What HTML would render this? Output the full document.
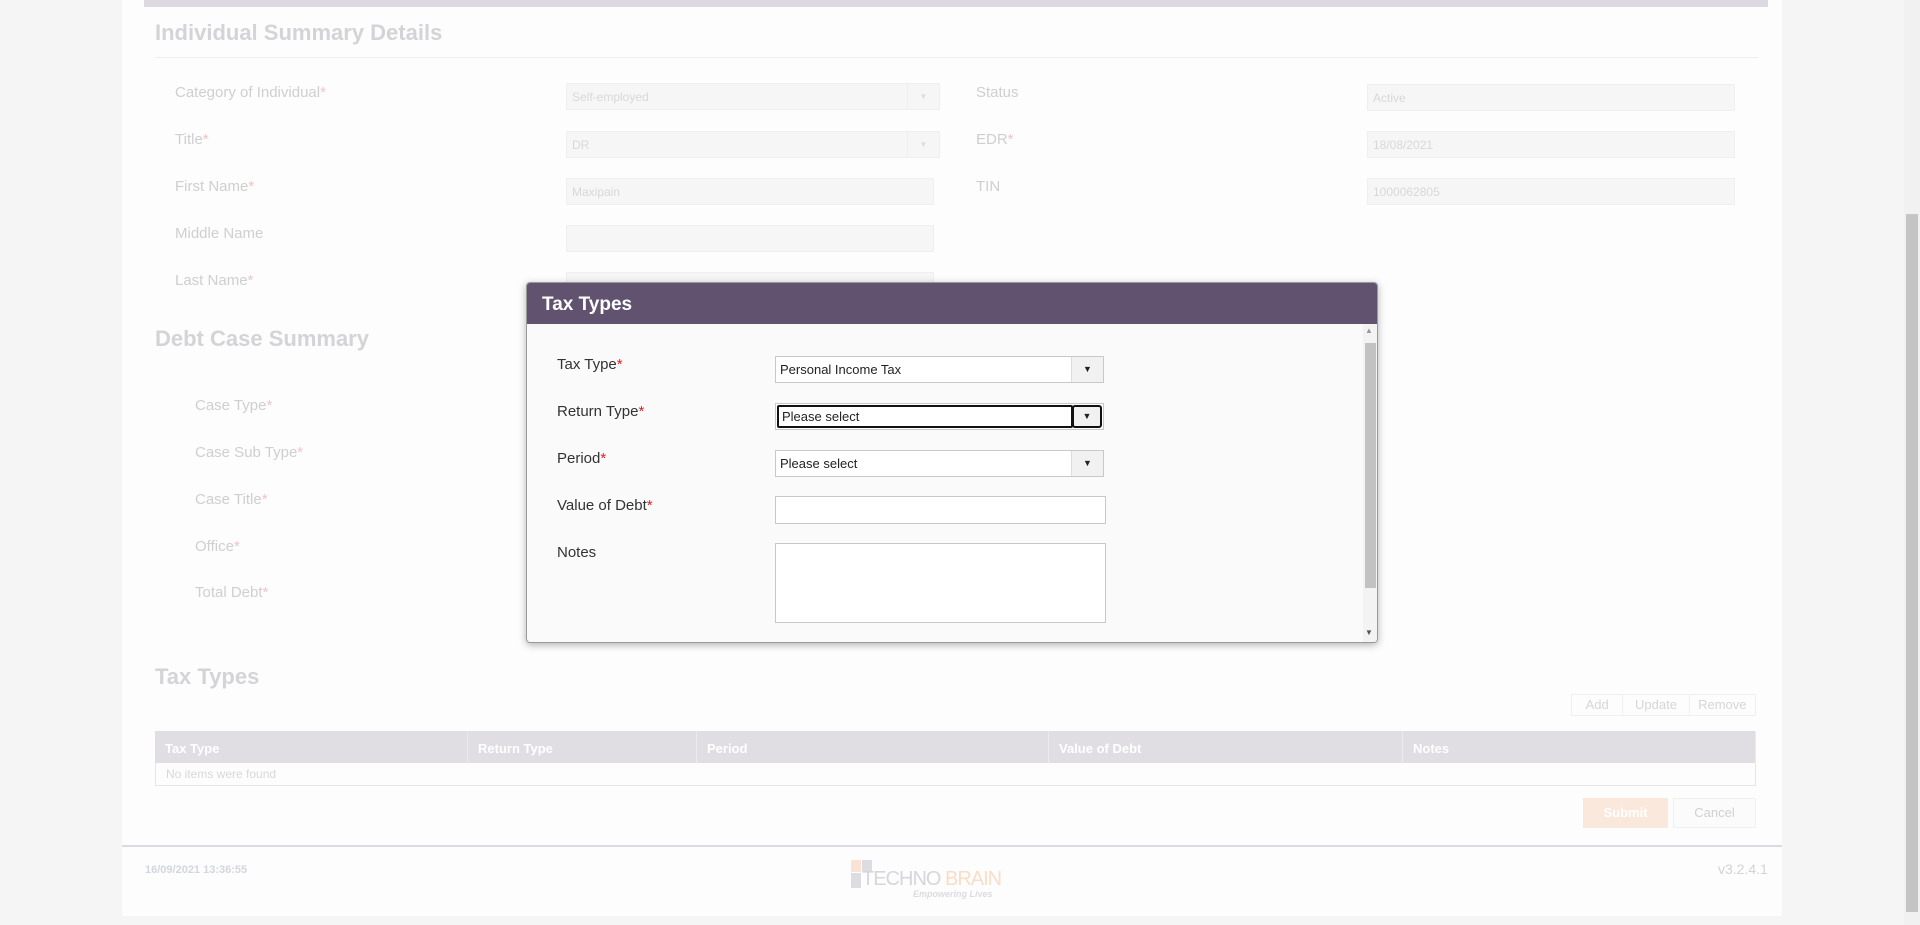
<!DOCTYPE html>
<html><head><style>
*{box-sizing:border-box;margin:0;padding:0}
body{width:1920px;height:925px;background:#f5f5f5;font-family:"Liberation Sans",sans-serif;position:relative;overflow:hidden}
.a{position:absolute}
.panel{left:122px;top:0;width:1660px;height:916px;background:#fdfdfd}
.topbar{left:144px;top:0;width:1624px;height:7px;background:#dcdae0}
h2{position:absolute;font-size:22px;font-weight:bold;color:#d4d4d8}
.lbl{position:absolute;font-size:15px;color:#cfcfd2}
.lbl i{font-style:normal;color:#f2c4c4}
.in{position:absolute;height:27px;background:#f6f6f6;border:1px solid #efefef;font-size:12px;color:#d8d8d8;padding:6px 5px}
.in .dd{position:absolute;right:0;top:0;width:32px;height:25px;border-left:1px solid #eee;font-size:8px;color:#ddd;text-align:center;line-height:25px}
.th{position:absolute;top:731px;height:32px;background:#e0dde3;font-size:13px;font-weight:bold;color:#fff;padding:10px 10px;border-right:1px solid #eceaf0}
.dlg{left:526px;top:282px;width:852px;height:361px;background:#fafafa;border:1px solid #9a9a9a;border-radius:4px;box-shadow:0 2px 8px rgba(0,0,0,.3);overflow:hidden}
.dh{left:0;top:0;width:100%;height:41px;background:#61536f;color:#fff;font-size:19px;font-weight:bold;padding:11px 15px}
.dl{position:absolute;left:30px;font-size:15px;color:#333}
.dl i{font-style:normal;color:#e02020}
.sel{position:absolute;left:248px;width:329px;height:27px;background:#fff;border:1px solid #c8c8c8;font-size:13px;color:#222;padding:5px 4px}
.sel .dd{position:absolute;right:0;top:0;width:32px;height:25px;background:#f1f1f1;border-left:1px solid #ddd;font-size:9px;text-align:center;line-height:25px;color:#222}
</style></head><body>
<div class="a panel"></div>
<div class="a topbar"></div>
<div class="a" style="left:1904px;top:0;width:16px;height:925px;background:#f1f1f1"></div>
<div class="a" style="left:1906px;top:214px;width:12px;height:698px;background:#c4c4c4"></div>

<h2 style="left:155px;top:20px">Individual Summary Details</h2>
<div class="a" style="left:155px;top:57px;width:1603px;height:1px;background:#eee"></div>
<div class="lbl" style="left:175px;top:84px">Category of Individual<i>*</i></div>
<div class="lbl" style="left:175px;top:131px">Title<i>*</i></div>
<div class="lbl" style="left:175px;top:178px">First Name<i>*</i></div>
<div class="lbl" style="left:175px;top:225px">Middle Name</div>
<div class="lbl" style="left:175px;top:272px">Last Name<i>*</i></div>
<div class="in" style="left:566px;top:83px;width:374px">Self-employed<div class="dd">▼</div></div>
<div class="in" style="left:566px;top:131px;width:374px">DR<div class="dd">▼</div></div>
<div class="in" style="left:566px;top:178px;width:368px">Maxipain</div>
<div class="in" style="left:566px;top:225px;width:368px"></div>
<div class="in" style="left:566px;top:272px;width:368px"></div>
<div class="lbl" style="left:976px;top:84px">Status</div>
<div class="lbl" style="left:976px;top:131px">EDR<i>*</i></div>
<div class="lbl" style="left:976px;top:178px">TIN</div>
<div class="in" style="left:1367px;top:84px;width:368px">Active</div>
<div class="in" style="left:1367px;top:131px;width:368px">18/08/2021</div>
<div class="in" style="left:1367px;top:178px;width:368px">1000062805</div>

<h2 style="left:155px;top:326px">Debt Case Summary</h2>
<div class="lbl" style="left:195px;top:397px">Case Type<i>*</i></div>
<div class="lbl" style="left:195px;top:444px">Case Sub Type<i>*</i></div>
<div class="lbl" style="left:195px;top:491px">Case Title<i>*</i></div>
<div class="lbl" style="left:195px;top:538px">Office<i>*</i></div>
<div class="lbl" style="left:195px;top:584px">Total Debt<i>*</i></div>

<h2 style="left:155px;top:664px">Tax Types</h2>
<div class="a" style="left:1571px;top:694px;width:185px;height:22px;border:1px solid #f0f0f0;font-size:13px;color:#d6d6d6;display:flex">
<span style="flex:1;text-align:center;line-height:20px;border-right:1px solid #f0f0f0">Add</span><span style="flex:1.3;text-align:center;line-height:20px;border-right:1px solid #f0f0f0">Update</span><span style="flex:1.3;text-align:center;line-height:20px">Remove</span></div>
<div class="th" style="left:155px;width:313px">Tax Type</div>
<div class="th" style="left:468px;width:229px">Return Type</div>
<div class="th" style="left:697px;width:352px">Period</div>
<div class="th" style="left:1049px;width:354px">Value of Debt</div>
<div class="th" style="left:1403px;width:353px">Notes</div>
<div class="a" style="left:155px;top:763px;width:1601px;height:23px;border:1px solid #e6e6e6;border-top:none;font-size:12px;color:#d8d8d8;padding:4px 10px">No items were found</div>
<div class="a" style="left:1583px;top:798px;width:85px;height:30px;background:#fbe8dc;color:#fff;font-size:13px;font-weight:bold;text-align:center;line-height:30px">Submit</div>
<div class="a" style="left:1673px;top:798px;width:83px;height:30px;background:#fbfbfb;border:1px solid #f0f0f0;color:#d0d0d0;font-size:13px;text-align:center;line-height:28px">Cancel</div>
<div class="a" style="left:122px;top:845px;width:1660px;height:2px;background:#dcdae0"></div>
<div class="a" style="left:145px;top:864px;font-size:11px;font-weight:bold;color:#d3d6de">16/09/2021 13:36:55</div>
<div class="a" style="left:1718px;top:861px;font-size:14px;color:#d3d3d8">v3.2.4.1</div>
<div class="a" style="left:851px;top:860px;width:10px;height:12px;background:#fbe3d3"></div>
<div class="a" style="left:862px;top:860px;width:10px;height:12px;background:#dcdce2"></div>
<div class="a" style="left:851px;top:873px;width:10px;height:15px;background:#dcdce2"></div>
<div class="a" style="left:862px;top:868px;font-size:20px;color:#d6d6dc;letter-spacing:-1px">TECHNO <span style="color:#fbdcc6">BRAIN</span></div>
<div class="a" style="left:913px;top:889px;font-size:9px;font-style:italic;font-weight:bold;color:#dcdce0">Empowering Lives</div>

<div class="a dlg">
<div class="a dh">Tax Types</div>
<div class="dl" style="top:73px">Tax Type<i>*</i></div>
<div class="dl" style="top:120px">Return Type<i>*</i></div>
<div class="dl" style="top:167px">Period<i>*</i></div>
<div class="dl" style="top:214px">Value of Debt<i>*</i></div>
<div class="dl" style="top:261px">Notes</div>
<div class="sel" style="top:73px">Personal Income Tax<div class="dd">▼</div></div>
<div class="sel" style="top:120px;padding:0"><div style="position:absolute;left:1px;top:1px;width:296px;height:23px;border:2px solid #111;border-radius:2px;padding:2px 3px">Please select</div><div class="dd" style="border:2px solid #111;border-radius:3px;width:30px;height:23px;top:1px;right:1px;line-height:19px">▼</div></div>
<div class="sel" style="top:167px">Please select<div class="dd">▼</div></div>
<div class="sel" style="top:213px;width:331px;height:28px"></div>
<div class="sel" style="top:260px;width:331px;height:80px"></div>
<div class="a" style="left:836px;top:41px;width:14px;height:318px;background:#f3f3f3"></div>
<div class="a" style="left:838px;top:60px;width:11px;height:245px;background:#c2c2c2"></div>
<div class="a" style="left:838px;top:43px;font-size:8px;color:#999">▲</div>
<div class="a" style="left:838px;top:345px;font-size:8px;color:#555">▼</div>
</div>
</body></html>
